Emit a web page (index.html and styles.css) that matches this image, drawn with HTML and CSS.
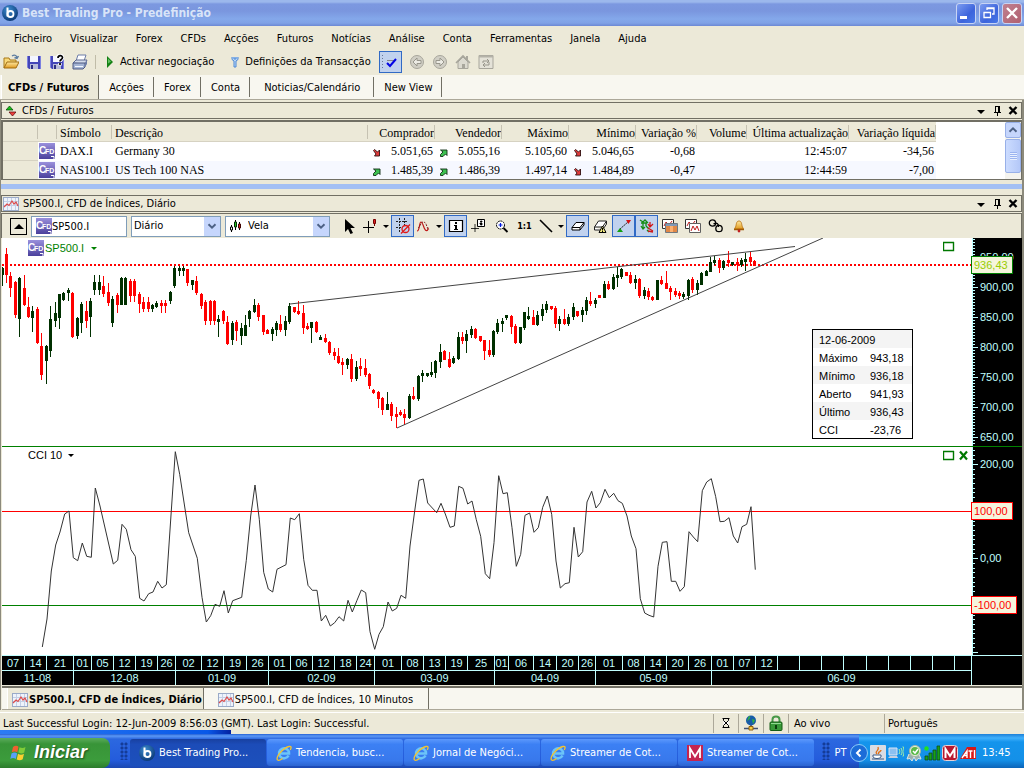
FILE: index.html
```html
<!DOCTYPE html>
<html lang="pt">
<head>
<meta charset="utf-8">
<title>Best Trading Pro - Predefinição</title>
<link rel="stylesheet" href="styles.css">
</head>
<body>
<svg class="defs" aria-hidden="true">
  <defs>
    <linearGradient id="violet" x1="0" y1="0" x2="0" y2="1"><stop offset="0" stop-color="#9a90dc"/><stop offset="1" stop-color="#4a409c"/></linearGradient>
    <radialGradient id="orb" cx=".4" cy=".3" r=".8"><stop offset="0" stop-color="#3c8cd0"/><stop offset="1" stop-color="#06306c"/></radialGradient>
    <linearGradient id="gold" x1="0" y1="0" x2="0" y2="1"><stop offset="0" stop-color="#ffe9a0"/><stop offset="1" stop-color="#e09a20"/></linearGradient>
    <symbol id="cfd" viewBox="0 0 16 16"><rect width="16" height="16" fill="url(#violet)"/><text x="0" y="11" class="t-c">C</text><text x="6" y="11" class="t-fd">FD</text><path d="M12 13.500h3v2.500" fill="none" stroke="#fff"/></symbol>
    <symbol id="best" viewBox="0 0 16 16"><circle cx="8" cy="8" r="8" fill="url(#orb)"/><path d="M5.500 2.500v9" stroke="#fff" stroke-width="2" fill="none"/><circle cx="8.500" cy="9" r="3" stroke="#fff" stroke-width="1.800" fill="none"/></symbol>
    <symbol id="graph" viewBox="0 0 16 16"><rect x=".5" y="1.500" width="15" height="13" fill="#eef3fb" stroke="#9aaac8"/><path d="M1 5.500h14M1 9.500h14M4.500 2v12M8.500 2v12M12.500 2v12" stroke="#c4d0e6" fill="none"/><path d="M1 11l3-3 2 1.500 3-4.500 2 3 2-2 2 4" stroke="#dc4c4c" stroke-width="1.200" fill="none"/></symbol>
    <symbol id="disk" viewBox="0 0 16 16"><path d="M1 2h14v13H3l-2-2z" fill="#4446b8"/><path d="M1 2h1v11H1zM14 2h1v13h-1z" fill="#7c80e0"/><rect x="4" y="2" width="8" height="6" fill="#f4f6ff"/><rect x="4" y="10" width="8" height="5" fill="#b8bcd8"/><rect x="5" y="11" width="2" height="4" fill="#2c2e80"/></symbol>
    <symbol id="down" viewBox="0 0 16 16"><path d="M4 7h8l-4 4z" fill="#000"/></symbol>
    <symbol id="pin" viewBox="0 0 16 16"><path d="M6.500 3v6M6 3.500h4M5 9.500h7M8.500 10v3" stroke="#000" fill="none"/><path d="M9 3h2v6H9z"/></symbol>
    <symbol id="cross" viewBox="0 0 16 16"><path d="M4.500 4l7 7M11.500 4l-7 7" stroke="#000" stroke-width="2.400" fill="none"/></symbol>
    <symbol id="fall" viewBox="0 0 8 8"><path d="M.5 1.500l1-1 3 2.500 2-2v6H1.500l1.500-2z" fill="#e03c3c" stroke="#301010" stroke-width=".9"/></symbol>
    <symbol id="rise" viewBox="0 0 8 8"><path d="M.5 1h6.500v5.500L5.500 5 3 7.500H.5v-2L3 3z" fill="#3cc050" stroke="#103014" stroke-width=".9"/></symbol>
    <symbol id="ie" viewBox="0 0 16 16"><path d="M12.500 10.500A5 5 0 1 1 13 8.500H4" fill="none" stroke="#6cc4f8" stroke-width="2.600"/><path d="M1.500 15C-.5 12 7 3 13 1.500c3-.6 2.200 2 1.200 3.500M1.500 15c1 .8 3 0 5-1.500" fill="none" stroke="#f4c430" stroke-width="1.300"/></symbol>
    <symbol id="chev" viewBox="0 0 16 16"><path d="M4 6l4 4 4-4" stroke="#4d6185" stroke-width="2.200" fill="none"/></symbol>
  </defs>
</svg>

<header class="titlebar">
  <svg class="i16"><use href="#best"/></svg>
  <h1 class="title">Best Trading Pro - Predefinição</h1>
  <div class="winbtns">
    <button class="winbtn" aria-label="Minimizar"><svg class="i16" viewBox="0 0 16 16"><path d="M2 11h7v3H2z" fill="#fff"/></svg></button>
    <button class="winbtn" aria-label="Restaurar"><svg class="i16" viewBox="0 0 16 16"><path d="M6 5V3h7v6h-2M5.500 3.500h8M3 7v5.500h6.500V7M2.500 7.500h7.500" stroke="#fff" stroke-width="1.300" fill="none"/></svg></button>
    <button class="winbtn winbtn-close" aria-label="Fechar"><svg class="i16" viewBox="0 0 16 16"><path d="M3 3l10 10M13 3L3 13" stroke="#fff" stroke-width="2.400"/></svg></button>
  </div>
</header>

<nav class="menu">
  <button>Ficheiro</button><button>Visualizar</button><button>Forex</button><button>CFDs</button><button>Acções</button><button>Futuros</button><button>Notícias</button><button>Análise</button><button>Conta</button><button>Ferramentas</button><button>Janela</button><button>Ajuda</button>
</nav>

<div class="toolbar">
  <button class="tool" aria-label="Abrir"><svg class="i16" viewBox="0 0 16 16"><path d="M1 14V4h5l1 2h6v3" fill="#f8d878" stroke="#a87818"/><path d="M1 14l3-6h12l-3 6z" fill="url(#gold)" stroke="#a06c10"/><path d="M9 2c3-2 5 0 5 2M15.500 2l-1.500 2.500L11.500 3.500" stroke="#5c7ca0" stroke-width="1.400" fill="none"/></svg></button>
  <button class="tool" aria-label="Guardar"><svg class="i16"><use href="#disk"/></svg></button>
  <button class="tool" aria-label="Guardar como"><svg class="i16" viewBox="0 0 16 16"><use href="#disk"/><path d="M8.500 4c0-3.500 5-3.500 5-.5C13.500 5.500 11 6 11 8M11 9v2.500" stroke="#fff" stroke-width="3.400" fill="none"/><path d="M9 4c0-3 4.500-3 4.500-.5C13.500 5.500 11 5.500 11 7.500M11 9v2" stroke="#000" stroke-width="1.700" fill="none"/></svg></button>
  <button class="tool" aria-label="Imprimir"><svg class="i16" viewBox="0 0 16 16"><path d="M4 7l2-6h8l-2 6z" fill="#fff" stroke="#6c7ca8"/><path d="M1 9l3-3h11l-2 4z" fill="#d4dcec" stroke="#5c6890"/><path d="M1 9h12v4l-2 2H1z" fill="#a4b4d4" stroke="#4c5880"/><path d="M13 10l2-4v4l-2 3z" fill="#6c7ca8"/><path d="M3 12.500h8" stroke="#f4f8ff"/></svg></button>
  <span class="tool-sep"></span>
  <button class="tool tool-text"><svg class="i10" viewBox="0 0 10 12"><path d="M2 0l6 6-6 6z" fill="#148014"/><path d="M3 2.500l3 3-3 2z" fill="#60c060"/></svg>Activar negociação</button>
  <button class="tool tool-text tool-defs"><svg class="i10" viewBox="0 0 10 12"><path d="M2 1v2.500l2 1.500v6h2V5l2-1.500V1M4 1v2h2V1" stroke="#4c88d4" fill="#bcd8f8"/></svg>Definições da Transacção</button>
  <button class="tool pressed" aria-label="Validar"><svg class="i16" viewBox="0 0 16 16"><path d="M.5 1v14" stroke="#687898" stroke-dasharray="1 2"/><path d="M5 6.500h8M5 9.500h2" stroke="#888"/><path d="M5 9l3 3 6-7" stroke="#0404e4" stroke-width="2" fill="none"/></svg></button>
  <button class="tool" aria-label="Anterior"><svg class="i16" viewBox="0 0 16 16"><circle cx="8" cy="8" r="6.500" fill="#d0cec4" stroke="#a8a69c"/><path d="M8 4L4 8l4 4v-2.500h4v-3H8z" fill="#ecebe4" stroke="#98968c"/></svg></button>
  <button class="tool" aria-label="Seguinte"><svg class="i16" viewBox="0 0 16 16"><circle cx="8" cy="8" r="6.500" fill="#d0cec4" stroke="#a8a69c"/><path d="M8 4l4 4-4 4v-2.500H4v-3h4z" fill="#ecebe4" stroke="#98968c"/></svg></button>
  <button class="tool" aria-label="Início"><svg class="i16" viewBox="0 0 16 16"><path d="M11 2h2v5h-2z" fill="#aaa89e"/><path d="M3 8v6.500h10V8L8 3z" fill="#dcdad0" stroke="#a8a69c"/><path d="M1 9l7-7 7 7" stroke="#a8a69c" stroke-width="1.600" fill="none"/><path d="M7 10h3v4H7z" fill="#a8a69c"/></svg></button>
  <button class="tool" aria-label="Actualizar"><svg class="i16" viewBox="0 0 16 16"><path d="M1 1.500h14v13H1z" fill="#e4e2d8" stroke="#a8a69c"/><path d="M1 2.500h14" stroke="#b4b2a8" stroke-width="2"/><path d="M5 9V7h6M9 5l2 2-2 2M11 8v3H5M7 9l-2 2 2 2" stroke="#98968c" fill="none"/></svg></button>
</div>

<div class="tabs" role="tablist">
  <button class="tab tab-active" role="tab">CFDs / Futuros</button><button class="tab" role="tab">Acções</button><button class="tab" role="tab">Forex</button><button class="tab" role="tab">Conta</button><button class="tab tab-wide" role="tab">Noticias/Calendário</button><button class="tab" role="tab">New View</button>
</div>

<main class="frame">
  <section class="panel-head">
    <svg class="i10 head-icon" viewBox="0 0 10 12"><path d="M0 5l3.500-4L7 5z" fill="#18c018" stroke="#044004" stroke-width=".7"/><path d="M3 7h7l-3.500 4z" fill="#f04040" stroke="#500404" stroke-width=".7"/></svg>
    <h2>CFDs / Futuros</h2>
    <span class="head-btns">
      <button aria-label="Opções"><svg class="i16"><use href="#down"/></svg></button><button aria-label="Fixar"><svg class="i16"><use href="#pin"/></svg></button><button aria-label="Fechar"><svg class="i16"><use href="#cross"/></svg></button>
    </span>
  </section>
  <section class="grid-box">
    <div class="grid-area">
      <table class="grid">
        <colgroup><col class="c-row"><col class="c-ico"><col class="c-sym"><col class="c-desc"><col class="c-num"><col class="c-num"><col class="c-num"><col class="c-num"><col class="c-pct"><col class="c-vol"><col class="c-time"><col class="c-net"></colgroup>
        <thead><tr><th></th><th></th><th class="l">Símbolo</th><th class="l">Descrição</th><th>Comprador</th><th>Vendedor</th><th>Máximo</th><th>Mínimo</th><th>Variação %</th><th>Volume</th><th>Última actualização</th><th>Variação líquida</th></tr></thead>
        <tbody>
          <tr><td class="rowhead"></td><td class="ico"><svg class="i16"><use href="#cfd"/></svg></td><td class="l">DAX.I</td><td class="l">Germany 30</td><td><svg class="arrow"><use href="#fall"/></svg>5.051,65</td><td><svg class="arrow"><use href="#rise"/></svg>5.055,16</td><td>5.105,60</td><td><svg class="arrow"><use href="#fall"/></svg>5.046,65</td><td>-0,68</td><td></td><td>12:45:07</td><td>-34,56</td></tr>
          <tr><td class="rowhead"></td><td class="ico"><svg class="i16"><use href="#cfd"/></svg></td><td class="l">NAS100.I</td><td class="l">US Tech 100 NAS</td><td><svg class="arrow"><use href="#rise"/></svg>1.485,39</td><td><svg class="arrow"><use href="#rise"/></svg>1.486,39</td><td>1.497,14</td><td><svg class="arrow"><use href="#fall"/></svg>1.484,89</td><td>-0,47</td><td></td><td>12:44:59</td><td>-7,00</td></tr>
        </tbody>
      </table>
    </div>
    <div class="scroll">
      <button class="scroll-up" aria-label="Subir"><svg class="i14" viewBox="0 0 16 16"><path d="M4 10l4-4 4 4" stroke="#4d6185" stroke-width="2.200" fill="none"/></svg></button>
      <div class="scroll-thumb"></div>
    </div>
  </section>
  <div class="splitter"></div>

  <section class="panel-head">
    <svg class="i16 head-graph"><use href="#graph"/></svg>
    <h2>SP500.I, CFD de Índices, Diário</h2>
    <span class="head-btns">
      <button aria-label="Opções"><svg class="i16"><use href="#down"/></svg></button><button aria-label="Fixar"><svg class="i16"><use href="#pin"/></svg></button><button aria-label="Fechar"><svg class="i16"><use href="#cross"/></svg></button>
    </span>
  </section>

  <section class="chartbar">
    <button class="fold" aria-label="Recolher"><svg class="i16" viewBox="0 0 16 16"><path d="M3 11h10L8 6z"/></svg></button>
    <label class="field field-sym"><svg class="i16"><use href="#cfd"/></svg><input type="text" value="SP500.I" aria-label="Símbolo"></label>
    <label class="field field-per"><select aria-label="Período"><option>Diário</option></select><span class="drop"><svg class="i14"><use href="#chev"/></svg></span></label>
    <label class="field field-type"><svg class="i16" viewBox="0 0 16 16"><path d="M3.500 7v7M7.500 2v10M11.500 4v8" stroke="#000"/><path d="M2.500 9h2v3h-2z" fill="#fff" stroke="#000"/><path d="M6.500 4h2v5h-2z" fill="#20c020" stroke="#042c04"/><path d="M10.500 6h2v4h-2z" fill="#e01818" stroke="#400404"/></svg><select aria-label="Tipo de gráfico"><option>Vela</option></select><span class="drop"><svg class="i14"><use href="#chev"/></svg></span></label>
    <div class="icons">
      <button class="tool" aria-label="Cursor"><svg class="i16" viewBox="0 0 16 16"><path d="M3 1v13l3-3 2.500 5 2.500-1-2.500-5H13z"/></svg></button>
      <button class="tool has-more" aria-label="Mira"><svg class="i16" viewBox="0 0 16 16"><path d="M5.500 3v12M0 9.500h11" stroke="#000"/><path d="M10.500 1.500h2v4h-2zM11.500 5v3" fill="#e02020" stroke="#700"/></svg><i class="more"></i></button>
      <button class="tool pressed" aria-label="Grelha"><svg class="i16" viewBox="0 0 16 16"><path d="M1 3.500h12M1 9.500h6M4.500 0v14M9.500 0v7" stroke="#222" stroke-dasharray="2 1"/><circle cx="10.500" cy="11" r="3.500" fill="none" stroke="#e01818" stroke-width="1.300"/><path d="M6 15.500l9-9" stroke="#e01818" stroke-width="1.300"/></svg></button>
      <button class="tool has-more" aria-label="Indicadores"><svg class="i16" viewBox="0 0 16 16"><path d="M1 13c3 0 2-9 4-9s3 8 5 8.500 2-1.500 2-3" stroke="#c01818" stroke-width="1.200" fill="none"/><path d="M2 10c2-1 3-6 5-6s3 1 4 5l2 3" stroke="#802020" stroke-dasharray="2 1" fill="none"/></svg><i class="more"></i></button>
      <button class="tool pressed" aria-label="Informação"><svg class="i16" viewBox="0 0 16 16"><path d="M1.500 2.500h13v11h-13z" fill="#fff" stroke="#000" stroke-width="1.200"/><path d="M7 4h2v2H7zM6 7h3v4h1v1H6v-1h1V8H6z"/></svg></button>
      <button class="tool" aria-label="Nota"><svg class="i16" viewBox="0 0 16 16"><path d="M6.500 1.500h7v7h-7z" fill="#fff" stroke="#000"/><path d="M9.500 3h1.500v1H9.500zM9 5h2v2H9.500V6H9zM4 6v8M0 10.500h8" stroke="#000" stroke-width=".8"/></svg></button>
      <button class="tool" aria-label="Ampliar"><svg class="i16" viewBox="0 0 16 16"><circle cx="6.500" cy="7" r="4" fill="#fff" stroke="#000" stroke-dasharray="2 .6"/><path d="M9.500 10l4 4" stroke="#000" stroke-width="1.800"/><path d="M4.500 7h4M6.500 5v4" stroke="#0018e0" stroke-width="1.200"/></svg></button>
      <button class="tool ratio">1:1</button>
      <button class="tool has-more" aria-label="Linha"><svg class="i16" viewBox="0 0 16 16"><path d="M2 2l12 12" stroke="#000" stroke-width="1.600"/></svg><i class="more"></i></button>
      <button class="tool pressed" aria-label="Borracha"><svg class="i16" viewBox="0 0 16 16"><path d="M2 9.500l4-5h8l-4 5zM2 9.500v2.500h8V9.500M10 12l4-5V4.500" fill="#fff" stroke="#000"/></svg></button>
      <button class="tool" aria-label="Apagar tudo"><svg class="i16" viewBox="0 0 16 16"><path d="M1.500 9l4-6h8l-4 6zM1.500 9v3h7M9.500 12l4-6V3" fill="#fff" stroke="#202020"/><path d="M6 14.500L9.500 8l3.500 6.500z" fill="#f8f080" stroke="#000"/><path d="M9.500 10v2.500M9.500 13v1" stroke="#000"/></svg></button>
      <button class="tool pressed" aria-label="Extremos"><svg class="i16" viewBox="0 0 16 16"><path d="M4 11l8-7" stroke="#222" stroke-dasharray="2 .7"/><path d="M10 2h5l-2.500 4z" fill="#d81010"/><path d="M1 14h6l-3-4z" fill="#10a010"/></svg></button>
      <button class="tool pressed" aria-label="Ordens"><svg class="i16" viewBox="0 0 16 16"><path d="M1 2l3 2 2-2 3 3M4 3v8M2 8l2 3 2-2M7 5v3M2 5h6M8 12l2 2M7 8l3 3" stroke="#148c14" stroke-width="1.300" fill="none"/><path d="M11 4v5M9 6l2 3 3-3M9 13l5 1M9 10l5 3" stroke="#d01818" stroke-width="1.300" fill="none"/></svg></button>
      <button class="tool" aria-label="Modelos"><svg class="i16" viewBox="0 0 16 16"><path d="M.5 1.500h11v9H.5z" fill="#fff" stroke="#303030"/><path d="M2 8l2-4 3 3 3-4" stroke="#c02020" fill="none"/><path d="M3.500 5.500h12v9h-12z" fill="#e08848" stroke="#707880"/><path d="M4 7h11" stroke="#8098b8" stroke-width="2"/><path d="M9.500 8v6" stroke="#fcb070" stroke-width="3"/></svg></button>
      <button class="tool" aria-label="Copiar gráfico"><svg class="i16" viewBox="0 0 16 16"><path d="M.5 1.500h11v9H.5z" fill="#fff" stroke="#303030"/><path d="M2 8l2-4 3 3 3-4" stroke="#c02020" fill="none"/><path d="M4.500 5.500h11v9h-11z" fill="#fff" stroke="#606060"/><path d="M6 13l2-5 2 4 2-4 2 5" stroke="#c02020" fill="none"/></svg></button>
      <button class="tool" aria-label="Ligar"><svg class="i16" viewBox="0 0 16 16"><circle cx="4.500" cy="5" r="3.200" fill="none" stroke="#000" stroke-width="1.300"/><circle cx="11" cy="10.500" r="3.200" fill="none" stroke="#000" stroke-width="1.300"/><path d="M5.500 6c3-2 5.500 0 5 3" stroke="#000" stroke-width="1.300" fill="none"/></svg></button>
      <button class="tool" aria-label="Alerta"><svg class="i16" viewBox="0 0 16 16"><path d="M8 3c-3 0-2.500 4-3.500 6l-1 2h9l-1-2C10.500 7 11 3 8 3z" fill="url(#gold)" stroke="#b87010" stroke-width=".8"/><path d="M3 11.500h10" stroke="#a05c08" stroke-width="1.500"/><circle cx="8" cy="13" r="1.400" fill="#c02020"/></svg></button>
    </div>
  </section>

  <section class="charts">
    <div class="pane pane-price">
      <svg class="plot" id="price" role="img" aria-label="SP500.I, velas diárias"></svg>
      <svg class="scale" id="price-scale"></svg>
      <button class="legend legend-price"><svg class="i16"><use href="#cfd"/></svg>SP500.I<i class="more"></i></button>
      <svg class="pane-btns" viewBox="0 0 26 12"><path d="M.5 1v8.500h10V1M0 1.500h11" stroke="#007800" stroke-width="1.400" fill="none"/></svg>
      <table class="quote">
        <tr><th colspan="2">12-06-2009</th></tr>
        <tr><th>Máximo</th><td>943,18</td></tr>
        <tr><th>Mínimo</th><td>936,18</td></tr>
        <tr><th>Aberto</th><td>941,93</td></tr>
        <tr><th>Último</th><td>936,43</td></tr>
        <tr><th>CCI</th><td>-23,76</td></tr>
      </table>
    </div>
    <div class="pane pane-cci">
      <svg class="plot" id="cci" role="img" aria-label="CCI 10"></svg>
      <svg class="scale" id="cci-scale"></svg>
      <button class="legend legend-cci">CCI 10<i class="more"></i></button>
      <svg class="pane-btns" viewBox="0 0 26 12"><path d="M.5 1v8.500h10V1M0 1.500h11" stroke="#007800" stroke-width="1.400" fill="none"/><path d="M17 1.500l7 8M24 1.500l-7 8" stroke="#007800" stroke-width="2.200"/></svg>
    </div>
    <div class="timeline"><div class="time-row" id="days"></div><div class="time-row" id="months"></div></div>
  </section>

  <div class="sheet-tabs" role="tablist">
    <button class="sheet sheet-active" role="tab"><svg class="i16"><use href="#graph"/></svg>SP500.I, CFD de Índices, Diário</button>
    <button class="sheet" role="tab"><svg class="i16"><use href="#graph"/></svg>SP500.I, CFD de Índices, 10 Minutos</button>
  </div>
</main>

<footer class="status">
  <span class="status-text">Last Successful Login: 12-Jun-2009 8:56:03 (GMT). Last Login: Successful.</span>
  <span class="status-ico"><svg class="i16" viewBox="0 0 16 16"><path d="M4.500 3.500h7M4.500 12.500h7M5.500 4v1.500L8 8l-2.500 2.500v2M10.500 4v1.500L8 8l2.500 2.500v2" stroke="#000" fill="#fff"/></svg></span>
  <span class="status-ico"><svg class="i16" viewBox="0 0 16 16"><circle cx="8" cy="5.500" r="5" fill="#185ca8"/><path d="M6 1c3 1 0 4-2 5M9 4l3 1-2 4z" fill="#30b040"/><path d="M8 10v3M1 13.500h14" stroke="#405070" stroke-width="1.600"/><path d="M6 11.500h4v3.500H6z" fill="#f8d040" stroke="#906010"/></svg></span>
  <span class="status-ico"><svg class="i16" viewBox="0 0 16 16"><path d="M4.500 8V4.500c0-4 7-4 7 0V8" stroke="#489848" stroke-width="2" fill="none"/><rect x="2" y="7" width="12" height="8.500" rx="1" fill="#389838" stroke="#145c14"/><path d="M3 8.500h10" stroke="#90d890"/><path d="M7 10h2v4H7z" fill="#0c3c0c"/></svg></span>
  <span class="status-mode">Ao vivo</span>
  <span class="status-lang">Português</span>
  <span class="strip"></span>
</footer>

<nav class="taskbar">
  <button class="start"><svg class="flag" viewBox="0 0 18 18"><path d="M3 3c2-1.500 4-1.500 5.500-.3L7.300 8.300C5.500 7 3.500 7.200 1.800 8.300z" fill="#f06030"/><path d="M9.500 3.200c2 1 4 1 6-.2l-1.300 5.500c-2 1.200-4 1.200-5.900.1z" fill="#80cc38"/><path d="M1.500 9.500c2-1.200 4-1.200 5.600 0l-1.300 5.500c-1.700-1.200-3.700-1.200-5.500-.1z" fill="#58a0f8"/><path d="M8 9.800c2 1.200 4 1.200 6 0L12.700 15.300c-2 1.200-4 1.200-6 .1z" fill="#fcd030"/></svg><span>Iniciar</span></button>
  <span class="grip"></span>
  <div class="tasks">
    <button class="task task-on"><svg class="i16"><use href="#best"/></svg>Best Trading Pro...</button>
    <button class="task"><svg class="i16"><use href="#ie"/></svg>Tendencia, busc...</button>
    <button class="task"><svg class="i16"><use href="#ie"/></svg>Jornal de Negóci...</button>
    <button class="task"><svg class="i16"><use href="#ie"/></svg>Streamer de Cot...</button>
    <button class="task"><svg class="i16" viewBox="0 0 16 16"><rect width="16" height="16" fill="#c42450"/><path d="M3 13V3.500l5 8 5-8V13" stroke="#fff" stroke-width="1.800" fill="none"/></svg>Streamer de Cot...</button>
  </div>
  <span class="grip"></span>
  <button class="lang">PT</button>
  <div class="tray">
    <button class="tray-fold" aria-label="Ocultar ícones"><svg class="i16" viewBox="0 0 16 16"><path d="M9.500 4.500L6 8l3.500 3.500" stroke="#fff" stroke-width="2" fill="none"/></svg></button>
    <svg class="i16" viewBox="0 0 16 16"><rect width="16" height="16" rx="1" fill="#d8dce4"/><path d="M3 10h8v2c-2 2-6 2-8 0zM2 14h12" stroke="#3c5c88" fill="#fff"/><path d="M7 9c-3-3 3-3 1-7M9 9c-2-2 2-2 2-4" stroke="#e07018" stroke-width="1.400" fill="none"/></svg>
    <svg class="i16" viewBox="0 0 16 16"><path d="M1 3h8v7H1z" fill="#8cc0f0" stroke="#d8e4f4"/><path d="M0 13h10l-1-2H2z" fill="#c8d0e0"/><path d="M11 4c1 2 1 3 0 5M13 3c1.500 2.500 1.500 5 0 7M15 1.500c1.500 3 1.500 7 0 10" stroke="#b0f8a0" fill="none"/></svg>
    <svg class="i16" viewBox="0 0 16 16"><path d="M3 9l-2 5 3-.5L6 16l2-4 2 4 2-2.500 3 .5-2-5" fill="#98b0b0" stroke="#dce4e4"/><circle cx="9" cy="6" r="5.500" fill="#e4f0dc" stroke="#a8b8a0"/><circle cx="9" cy="6" r="4" fill="#58b848"/><path d="M7 6l2 2 3-4" stroke="#fff" stroke-width="1.500" fill="none"/></svg>
    <svg class="i16" viewBox="0 0 16 16"><circle cx="2.500" cy="3.500" r="2.200" fill="#20e020"/><path d="M1 11h3v4H1zM5 8h3v7H5zM9 5h3v10H9zM13 1h3v14h-3z" fill="#18a018" stroke="#0c4c1c" stroke-width=".8"/></svg>
    <svg class="i16" viewBox="0 0 16 16"><rect x=".5" y=".5" width="15" height="15" rx="3" fill="#b81830" stroke="#e8d0d4"/><path d="M3.500 13V4L8 11l4.500-7v9" stroke="#fff" stroke-width="2" fill="none"/></svg>
    <svg class="i16" viewBox="0 0 16 16"><path d="M0 14L7 2h9v12z" fill="#d81818"/><path d="M2 13l5-7v7M4 10.500h3M8.500 6h4M10.500 6v7M14.500 5v8" stroke="#fff" stroke-width="1.400" fill="none"/></svg>
    <time class="clock">13:45</time>
  </div>
</nav>
<script src="chart.js"></script>
</body>
</html>
```
FILE: styles.css
```css
:root {
  --ui: "DejaVu Sans Condensed", "Noto Sans", sans-serif;
  --arial: "Liberation Sans", Arial, sans-serif;
  --beige: #ece9d8;
  --line: #716f64;
  --cyan: #c0ffff;
}
* { box-sizing: border-box; }
body {
  margin: 0;
  min-height: 100vh;
  display: flex;
  flex-direction: column;
  background: var(--beige);
  font: 11px/14px var(--ui);
  color: #000;
}
button, input, select { font: inherit; color: inherit; border: 0; background: none; padding: 0; margin: 0; border-radius: 0; white-space: nowrap; }
h1, h2 { margin: 0; font: inherit; }
svg { display: block; flex: none; }
.defs { position: absolute; width: 0; height: 0; }
.i16 { width: 16px; height: 16px; }
.i14 { width: 14px; height: 14px; }
.i10 { width: 10px; height: 12px; }
.t-c { font: bold 10px var(--arial); fill: #fff; }
.t-fd { font: bold 7px var(--arial); fill: #fff; }

.titlebar {
  display: flex; align-items: center; gap: 4px;
  height: 26px; padding: 0 2px;
  background: linear-gradient(#9cb8ec 0, #9cb8ec 2px, #7c98e0 4px, #7a96de 11px, #84a8ea 19px, #80a2e6 23px, #6c88d4 26px);
}
.title { flex: 1; font: bold 12px/16px var(--ui); color: #d8e4f8; }
.winbtns { display: flex; gap: 3px; }
.winbtn {
  display: flex; align-items: center; justify-content: center;
  width: 20px; height: 21px;
  border: 1px solid #c8d4f4; border-radius: 3px;
  background: linear-gradient(135deg, #7c9cf0, #3c64dc 60%, #4878e8);
}
.winbtn-close { background: linear-gradient(135deg, #c08090, #b06070); }

.menu { display: flex; align-items: center; gap: 18px; height: 23px; padding: 2px 14px 0; }
.toolbar { display: flex; align-items: center; height: 26px; padding: 0 0 1px 3px; }
.toolbar .tool { margin-right: 7px; }
.tool { display: flex; align-items: center; }
.tool-sep { width: 1px; height: 14px; margin: 0 9px 0 0; background: #c0bca8; }
.toolbar .tool-text { gap: 5px; margin-right: 16px; }
.toolbar .tool-defs { margin-right: 8px; }
.pressed { width: 23px; height: 22px; justify-content: center; border: 1px solid #316ac5; background: #c1d2ee; }

.tabs { display: flex; height: 25px; background: #f8f7f0; border-bottom: 1px solid #aca899; padding-left: 1px; }
.tab { display: flex; align-items: center; padding: 2px 10px 0; position: relative; }
.tab::after { content: ""; position: absolute; right: 0; top: 2px; bottom: 2px; width: 1px; background: var(--line); }
.tab-active { padding: 2px 10px 0 6px; background: var(--beige); font-weight: bold; border-left: 1px solid #fff; }
.tab-active::after { top: 0; bottom: 0; }
.tab-wide { padding: 2px 14px 0; }

.frame { flex: 1; display: flex; flex-direction: column; padding-top: 2px; border: solid #8c8a7c; border-width: 0 2px 0 1px; }
.panel-head { display: flex; align-items: center; height: 17px; border: 1px solid var(--line); }
.head-icon { margin: 0 6px 0 4px; }
.head-graph { margin: 0 4px 0 1px; }
.panel-head h2 { flex: 1; }
.head-btns { display: flex; }

.grid-box { display: flex; height: 60px; margin-top: 1px; border: 1px solid var(--line); border-width: 2px 1px 1px 2px; background: #fff; }
.grid-area { flex: 1; overflow: hidden; }
.grid { table-layout: fixed; width: 933px; border-collapse: collapse; font: 12px/16px "Liberation Serif", serif; }
.c-row { width: 35px; } .c-ico { width: 19px; } .c-sym { width: 55px; } .c-desc { width: 256px; }
.c-num { width: 67px; } .c-pct { width: 61px; } .c-vol { width: 50px; } .c-time { width: 102px; } .c-net { width: 87px; }
.grid th { position: relative; height: 19px; padding: 3px 1px 0 3px; font-weight: normal; text-align: right; white-space: nowrap; background: var(--beige); border-bottom: 1px solid #d6d2c2; }
.grid th::after { content: ""; position: absolute; right: 0; top: 3px; bottom: 2px; width: 1px; background: #c6c2b2; }
.grid td { height: 19px; padding: 0 2px 1px 5px; text-align: right; white-space: nowrap; }
.grid .l { text-align: left; padding-left: 3px; }
.grid .ico { padding: 0 0 0 1px; }
.grid .rowhead { background: var(--beige); border-bottom: 1px solid #d6d2c2; }
.grid tbody tr:nth-child(2) { background: #f6f8ff; }
.arrow { float: left; width: 8px; height: 8px; margin-top: 6px; }
.scroll { display: flex; flex-direction: column; gap: 1px; width: 16px; background: #f4f3ee; }
.scroll-up { height: 16px; border: 1px solid #98b0e8; border-radius: 2px; background: #c6d6fc; }
.scroll-thumb { height: 34px; border: 1px solid #98b0e8; border-radius: 2px; background: repeating-linear-gradient(#9cb4f0 0 1px, #e8f0ff 1px 2px) center / 7px 8px no-repeat, linear-gradient(90deg, #ccdcff, #b4c8f8); }
.splitter { height: 5px; margin: 4px 0 6px; background: #a4c0f4; }

.chartbar { display: flex; align-items: center; height: 25px; margin-top: 1px; padding-left: 8px; border: 1px solid var(--line); border-bottom: 0; }
.fold { display: flex; align-items: center; justify-content: center; width: 17px; height: 17px; border: 1px solid #000; margin-right: 4px; }
.field { display: flex; align-items: center; height: 21px; margin-right: 4px; border: 1px solid #7f9db9; background: #fff; }
.field input, .field select { flex: 1; min-width: 0; height: 19px; appearance: none; outline: 0; }
.field-sym { width: 96px; padding-left: 4px; }
.field-per { width: 90px; padding-left: 2px; }
.field-type { width: 105px; padding-left: 2px; }
.field-type select { padding-left: 4px; }
.drop { display: flex; align-items: center; justify-content: center; width: 16px; height: 19px; background: #c6d6fc; pointer-events: none; }
.icons { display: flex; align-items: center; padding-left: 4px; }
.icons .tool { width: 23px; height: 22px; justify-content: center; }
.icons .has-more { width: 30px; gap: 4px; }
.icons .ratio { font: bold 9px/14px var(--ui); }
.more { width: 0; height: 0; border: 3px solid transparent; border-top-color: currentColor; border-bottom: 0; }

.charts { flex: 1; display: flex; flex-direction: column; margin-left: 1px; font: 11px/14px var(--arial); }
.pane { position: relative; display: flex; background: #fff; }
.pane-price { height: 209px; border-bottom: 1px solid #008000; }
.pane-cci { flex: 1; min-height: 207px; }
.plot { flex: 1; min-width: 0; height: 207px; }
.scale { width: 51px; height: 208px; align-self: stretch; background: linear-gradient(90deg, #fff 1px, #000 1px); }
.pane-price .plot { height: 208px; }
.pane-cci .scale { height: auto; }
.scale text { fill: var(--cyan); }
.up { fill: #003000; } .dn { fill: #f00; }
.trend { stroke: #444; fill: none; }
.last { stroke: #f00; stroke-width: 2; stroke-dasharray: 2 2; }
.series { stroke: #333; fill: none; }
.hi { stroke: #f00; } .lo { stroke: #008000; }
.tick { stroke: var(--cyan); shape-rendering: crispEdges; }
.tag { fill: #f5f5dc; shape-rendering: crispEdges; }
.legend { position: absolute; display: flex; align-items: center; }
.legend .more { margin-left: 6px; }
.legend-price { left: 26px; top: 2px; color: #008000; gap: 1px; }
.legend-cci { left: 26px; top: 1px; }
.pane-btns { position: absolute; right: 53px; top: 3px; width: 26px; height: 12px; }
.quote { position: absolute; right: 109px; top: 91px; width: 101px; border: 1px solid #000; border-spacing: 0; background: #fff; }
.quote th, .quote td { height: 18px; padding: 1px 0 0; text-align: left; font-weight: normal; }
.quote th { padding-left: 6px; width: 57px; }
.quote tr:nth-child(odd) { background: #f4f4f4; }
.timeline { height: 30px; background: #000; color: var(--cyan); border-top: 1px solid var(--cyan); }
.time-row { display: flex; height: 14px; }
.time-row:first-child { height: 15px; }
.time-row span { flex: none; overflow: hidden; text-align: center; border-right: 1px solid var(--cyan); }
.time-row:first-child span { border-bottom: 1px solid var(--cyan); }

.sheet-tabs { display: flex; height: 24px; margin: 1px 0 0 1px; padding-left: 5px; border: solid var(--line); border-width: 2px 0 0; border-bottom: 1px solid #aca899; background: #f8f7f0; }
.sheet { display: flex; align-items: center; gap: 1px; padding: 3px 15px 0 14px; border-right: 1px solid var(--line); }
.sheet-active { padding: 3px 1px 0 4px; background: var(--beige); font-weight: bold; border-left: 1px solid #fff; }

.status { position: relative; display: flex; align-items: center; height: 22px; margin-top: 2px; border-top: 1px solid #fff; }
.status-text { flex: 1; padding-left: 3px; }
.status-ico { width: 25px; height: 19px; padding: 1px 0 0 4px; border-left: 1px solid #aca899; }
.status-mode { width: 96px; padding-left: 5px; border-left: 1px solid #aca899; line-height: 19px; }
.status-lang { width: 140px; padding-left: 3px; border-left: 1px solid #aca899; line-height: 19px; }
.strip { position: absolute; left: 0; bottom: 0; width: 231px; height: 4px; background: linear-gradient(90deg, #2c7cf4 0, #0858e8 90%, #0420a0); }

.taskbar { display: flex; height: 34px; align-items: stretch; color: #fff; background: linear-gradient(#2460d4 0, #5c98f4 2px, #2c68e0 5px, #245cdc 26px, #1c48b0 34px); }
.start { display: flex; align-items: center; gap: 6px; width: 110px; padding: 0 0 0 10px; margin: 4px 8px 0 0; border-radius: 0 8px 8px 0; background: linear-gradient(#5cac5c, #389438 20%, #3c9c3c 75%, #2c7c2c); font: italic bold 18px/20px var(--arial); text-shadow: 1px 1px 2px #1c4c1c; }
.start svg { width: 18px; height: 18px; }
.start span { padding-bottom: 2px; }
.grip { width: 8px; margin: 8px 4px 8px 2px; background: radial-gradient(circle at 2px 2px, #143c98 1px, transparent 2px) 0 0 / 4px 4px; }
.tasks { flex: 1; display: flex; gap: 1px; padding: 5px 6px 2px 0; margin-left: -2px; }
.task { flex: 1 1 0; max-width: 136px; display: flex; align-items: center; gap: 4px; padding-left: 9px; border-radius: 3px; background: linear-gradient(#5c98fc, #3c80f4 20%, #3878ec 80%, #2c64d0); }
.task-on { background: linear-gradient(#1840a0, #1c4cb8 20%, #1c50bc); }
.lang { align-self: center; width: 13px; margin: 3px 12px 0 0; }
.tray { display: flex; align-items: center; gap: 2px; width: 165px; padding-top: 4px; background: linear-gradient(#1c80d8 0, #40b0fc 4px, #1494ec 8px, #1490e8 26px, #0c64b8 34px); }
.tray-fold { width: 18px; height: 18px; margin-left: -9px; border-radius: 9px; border: 1px solid #8cccf8; background: #1c6cd8; }
.clock { margin-left: 4px; }
```
FILE: chart.js
```js
(function () {
  var NS = "http://www.w3.org/2000/svg";
  function add(parent, name, attrs, text) {
    var n = document.createElementNS(NS, name);
    for (var k in attrs) n.setAttribute(k, attrs[k]);
    if (text) n.textContent = text;
    parent.appendChild(n);
    return n;
  }
  var price = document.getElementById("price");

  // Candles: x, high, body top, body bottom, low, direction. Units are thirds of a pixel.
  var runs = [
    [0, "8,95,98,120,152,u 19,39,57,120,143,d 31,111,123,159,185,d 46,138,141,240,248,d 58,126,129,251,305,u 73,120,159,210,213,d 85,185,216,246,248,d 97,213,228,249,291,u 112,216,222,324,326,d 124,294,333,420,435,d 139,330,333,378,446,u 151,213,252,348,366,u 166,201,234,258,276,u 178,177,177,249,282,u 190,171,174,195,197,u 205,159,165,174,197,u 217,171,174,306,308,d 232,246,249,303,311,u 244,201,207,264,293,u 259,198,228,258,279,d 271,189,198,246,305,u 283,120,141,165,179,u 298,120,141,165,179,u 310,123,153,177,185,d 325,144,171,204,213,d 337,183,192,264,275,u 352,174,180,210,234,d 364,126,129,210,210,u 376,126,129,210,210,u 391,132,138,183,201,d 403,132,138,183,201,d 418,171,177,207,234,d 430,186,201,222,231,d 445,186,201,222,231,d 457,207,210,222,231,u 469,198,204,216,218,u 484,195,204,213,234,d 496,195,204,213,234,d 511,168,171,198,207,u 523,93,99,153,158,u 538,93,99,108,123,u 550,93,99,108,123,u 562,102,102,144,153,d 577,135,135,150,164,u 589,123,138,174,179,d 604,174,177,213,221,d 616,195,201,258,270,d 631,195,198,258,270,d 643,195,198,258,270,d 655,240,252,261,305,u 670,225,228,258,266,d 682,243,261,327,329,d 697,258,264,315,329,u 709,255,261,288,318,d 724,264,279,303,329,u 736,240,270,303,303,u 748,225,228,252,276,u 763,192,210,231,234,u 775,204,210,246,258,d"],
    [750, "40,240,240,291,300,d 52,282,285,297,297,d 67,276,282,297,318,u 79,258,264,285,303,u 91,240,267,285,291,d 106,243,258,285,303,u 118,204,213,261,266,u 133,216,216,231,234,d 145,198,228,237,240,d 160,210,234,279,297,d 172,264,273,282,285,d 184,261,261,279,323,u 199,258,261,291,294,d 211,300,306,315,315,u 226,297,309,321,323,d 238,318,321,354,360,d 253,339,351,363,375,d 265,339,363,384,387,d 277,369,381,390,420,d 292,369,372,390,402,u 304,357,372,432,441,d 319,378,396,432,437,u 331,369,393,402,423,d 346,372,399,420,426,d 358,414,417,453,462,d 370,462,465,474,476,d 385,468,471,492,518,d 397,486,489,525,540,d 412,471,507,525,525,u 424,501,507,543,558,d 439,516,537,546,578,d 451,525,531,540,543,d 463,522,537,549,570,d 478,477,483,549,551,u 490,456,483,492,494,d 505,420,423,492,497,u 517,405,414,423,441,u 532,414,414,423,426,u 544,381,411,420,426,u 556,375,378,414,429,u 571,327,351,381,399,u 583,345,348,375,375,d 598,351,372,396,399,d 610,363,369,384,387,u 625,291,306,372,375,u 637,291,306,318,326,d 649,285,297,318,354,u 664,273,282,300,308,u 676,279,282,309,312,d 691,303,303,318,321,d 703,315,315,348,375,d 718,315,345,360,366,d 730,285,288,360,366,u 742,252,264,291,297,u 757,249,258,267,291,u 769,240,240,249,255,u"],
    [1500, "34,240,243,276,297,d 46,267,273,324,327,d 61,276,276,324,327,u 73,231,231,279,285,u 85,216,243,252,255,u 100,225,246,270,270,d 112,228,240,270,273,u 127,207,222,243,258,u 139,198,207,225,234,u 154,213,213,222,225,d 166,213,219,267,279,d 178,243,252,267,288,u 193,222,252,267,270,d 205,237,246,267,273,u 220,204,216,246,255,u 232,228,228,243,246,d 247,216,225,240,261,u 259,186,195,228,240,u 271,171,198,207,213,d 286,189,195,207,219,u 298,180,180,189,189,d 313,138,147,189,189,u 325,138,147,162,165,d 340,117,126,162,165,u 352,96,120,129,156,u 364,99,102,126,132,u 379,111,111,123,123,d 391,111,120,144,147,d 406,120,132,144,162,u 418,129,132,183,189,d 433,156,165,183,192,u 445,159,168,186,195,d 457,183,186,195,198,d 472,135,135,195,195,u 484,123,135,147,150,d 499,108,144,162,162,d 511,153,159,171,195,d 526,159,168,180,186,d 538,168,174,183,192,d 550,171,177,186,192,u 565,132,135,183,195,u 577,126,132,165,174,d 592,135,144,165,180,u 604,111,114,150,150,u 619,105,108,123,123,u 631,66,81,111,111,u 643,63,75,84,90,u 658,69,75,99,114,d 670,75,78,99,105,u 685,48,75,84,96,d 697,81,81,90,93,u 712,69,81,90,108,d 724,69,75,90,96,u 736,54,72,81,108,u 751,51,66,81,90,d 763,75,78,93,93,d"]
  ];
  add(price, "line", { x1: 0, x2: "100%", y1: 27, y2: 27, "class": "last" });
  runs.forEach(function (run) {
    run[1].split(" ").forEach(function (item) {
      var c = item.split(",");
      var x = Math.floor((run[0] + +c[0]) / 3) - 2;
      var y = c.slice(1, 5).map(function (v) { return Math.round(v / 3) - 3; });
      var cls = c[5] === "u" ? "up" : "dn";
      add(price, "rect", { x: x, y: y[0], width: 1, height: Math.max(1, y[3] - y[0]), "class": cls });
      add(price, "rect", { x: x - 1, y: y[1], width: 3, height: Math.max(1, y[2] - y[1]), "class": cls });
    });
  });
  add(price, "path", { d: "M288 66L793 8.500M395 190L821 0", "class": "trend" });

  // CCI values as x,y in thirds of a pixel.
  var cciData = "127,603 141,519 154,375 167,297 180,258 194,204 207,195 220,335 233,344 247,291 260,331 274,334 286,126 300,180 340,354 353,343 366,235 379,250 393,311 406,331 419,457 432,465 446,443 459,438 473,406 486,426 499,416 526,17 539,85 566,260 592,337 606,454 619,528 632,509 645,475 659,481 672,434 685,501 698,464 725,454 739,343 752,210 765,117 778,220 791,379 805,429 818,438 831,370 858,356 871,216 884,221 898,203 911,340 924,418 937,433 951,433 964,525 977,508 991,540 1004,530 1017,512 1031,525 1044,463 1057,498 1071,463 1084,432 1097,440 1110,557 1124,610 1137,565 1150,542 1164,468 1177,495 1190,487 1203,448 1217,457 1230,300 1244,195 1257,103 1270,99 1283,171 1310,200 1323,172 1336,204 1350,244 1363,240 1376,121 1389,127 1403,174 1416,165 1429,221 1442,271 1456,383 1469,398 1482,290 1496,89 1509,143 1522,140 1536,245 1549,361 1562,325 1575,208 1589,201 1602,259 1615,245 1628,184 1642,150 1655,205 1668,345 1681,426 1695,413 1708,410 1722,244 1735,333 1748,317 1761,168 1775,136 1788,186 1801,170 1815,130 1828,155 1841,142 1854,164 1867,172 1881,210 1894,270 1908,308 1921,458 1934,501 1947,508 1961,513 1974,361 1987,289 2001,287 2014,406 2027,406 2040,436 2053,422 2067,257 2080,273 2093,287 2107,134 2120,108 2134,98 2147,152 2160,227 2173,226 2187,215 2200,270 2213,291 2226,242 2240,235 2253,182 2266,371";
  var cci = document.getElementById("cci");
  add(cci, "line", { x1: 0, x2: "100%", y1: 64.5, y2: 64.5, "class": "hi" });
  add(cci, "line", { x1: 0, x2: "100%", y1: 158.5, y2: 158.5, "class": "lo" });
  add(cci, "polyline", {
    points: cciData.split(" ").map(function (p) {
      p = p.split(",");
      return (p[0] / 3 - 2).toFixed(1) + "," + (p[1] / 3 - 1).toFixed(1);
    }).join(" "), "class": "series"
  });

  function scale(id, first, step, count, majors, tags) {
    var s = document.getElementById(id), d = "M1.500 0v400";
    for (var i = 0; i < count; i++) d += "M2 " + (Math.round(first + i * step) + 0.5) + "h2";
    majors.forEach(function (m) { d += "M2 " + (m[0] + 0.5) + "h5"; });
    add(s, "path", { d: d, "class": "tick" });
    majors.forEach(function (m) { add(s, "text", { x: 9, y: m[0] + 4 }, m[1]); });
    tags.forEach(function (t) {
      add(s, "rect", { x: 0.5, y: t[0] + 0.5, width: t[1], height: 17, "class": "tag", stroke: t[3] });
      add(s, "text", { x: 3, y: t[0] + 13, style: "fill:" + t[4] }, t[2]);
    });
  }
  scale("price-scale", 1, 3, 69,
    [[19, "950,00"], [49, "900,00"], [79, "850,00"], [109, "800,00"], [139, "750,00"], [169, "700,00"], [199, "650,00"]],
    [[18, 41, "936,43", "#008000", "#99cc00"]]);
  scale("cci-scale", 3, 4.7, 43,
    [[17, "200,00"], [111, "0,00"], [205, ""]],
    [[55, 41, "100,00", "#ff0000", "#ff0000"], [149, 45, "-100,00", "#ff0000", "#ff0000"]]);

  function row(id, edges, labels) {
    var host = document.getElementById(id), prev = 1;
    edges.forEach(function (edge, i) {
      var cell = document.createElement("span");
      cell.style.width = (edge - prev) + "px";
      cell.textContent = labels[i] || "";
      host.appendChild(cell);
      prev = edge;
    });
  }
  row("days",
    [24, 46, 73, 91, 113, 135, 157, 175, 201, 223, 246, 268, 290, 312, 334, 356, 374, 401, 423, 445, 467, 494, 508, 533, 556, 578, 595, 622, 644, 666, 688, 711, 733, 755, 777, 799, 821, 843, 866, 888, 910, 932, 954, 971],
    "07 14 21 01 05 12 19 26 02 12 19 26 01 06 12 18 24 01 08 13 19 25 01 06 14 20 26 01 08 14 20 26 01 07 12".split(" "));
  row("months", [73, 175, 268, 374, 494, 595, 711, 971],
    ["11-08", "12-08", "01-09", "02-09", "03-09", "04-09", "05-09", "06-09"]);
})();
```
